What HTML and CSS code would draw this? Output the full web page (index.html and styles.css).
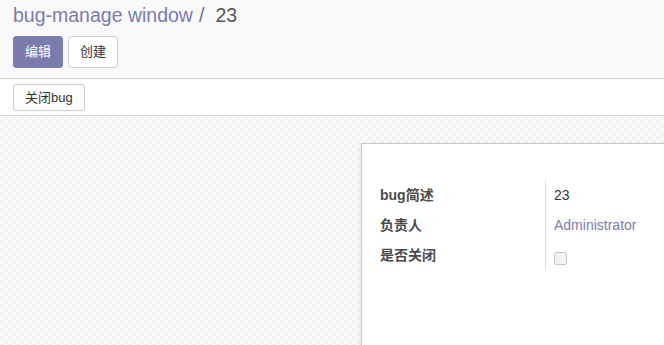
FILE: index.html
```html
<!DOCTYPE html>
<html>
<head>
    <meta charset="utf-8" />
    <title>bug-manage window</title>
    <link rel="stylesheet" href="styles.css">
</head>
<body>
<div class="control_panel">
    <ol class="breadcrumb">
        <li><a href="javascript:;">bug-manage window</a></li>
        <li class="sep">/</li>
        <li class="active">23</li>
    </ol>
    <div class="cp_buttons">
        <a href="javascript:;" class="btn btn_primary">编辑</a>
        <a href="javascript:;" class="btn">创建</a>
    </div>
</div>
<div class="statusbar">
    <a href="javascript:;" class="btn btn_small">关闭bug</a>
</div>
<div class="form_view">
    <div class="form_sheet">
        <div class="inner_group">
            <div class="label">bug简述</div>
            <div class="value">23</div>
            <div class="label">负责人</div>
            <div class="value"><a href="javascript:;">Administrator</a></div>
            <div class="label">是否关闭</div>
            <div class="value"><span class="checkbox"></span></div>
        </div>
    </div>
</div>
</body>
</html>
```
FILE: styles.css
```css
html, body {margin: 0;padding: 0;height: 100%;overflow: hidden;}
body {font-family: "Liberation Sans", "Noto Sans CJK SC", sans-serif;font-size: 13px;color: #4c4c4c;background: #fff;}
a {text-decoration: none;}

.control_panel {background: #f9f9f9;border-bottom: 1px solid #cfcfcf;padding: 2px 13px 10px;height: 66px;}
.breadcrumb {list-style: none;margin: 0;padding: 0;display: flex;font-size: 19.5px;line-height: 26px;height: 26px;}
.breadcrumb a {color: #7c7bad;}
.breadcrumb .sep {color: #6f6e94;padding: 0 11px 0 6px;}
.breadcrumb .active {color: #555;}
.cp_buttons {display: flex;gap: 5px;margin-top: 8px;}

.btn {display: block;box-sizing: border-box;height: 32px;line-height: 30px;padding: 0 11px;border: 1px solid #ccc;border-radius: 3px;background: #fff;color: #333;font-size: 13px;}
.btn_primary {background: #7c7bad;border-color: #7c7bad;color: #fff;}
.btn_small {height: 27px;line-height: 25px;padding: 0 11px;display: inline-block;}

.statusbar {background: #fff;border-bottom: 1px solid #d4d4d4;padding: 5px 13px 0;height: 31px;}

.form_view {height: 100%;padding: 27px 0 0 361px;background-color: #f7f7f7;
    background-image: conic-gradient(#f2f2f2 25%, #fbfbfb 0 50%, #f2f2f2 0 75%, #fbfbfb 0);
    background-size: 8px 8px;}
.form_sheet {background: #fff;border-left: 1px solid #c8c8d3;border-top: 1px solid #c8c8d3;height: 400px;padding: 36px 0 0 18px;box-shadow: -2px 0 6px -3px rgba(0,0,0,0.15);}

.inner_group {display: grid;grid-template-columns: 165px 1fr;grid-auto-rows: 30px;line-height: 30px;font-size: 14px;}
.inner_group .label {font-weight: bold;color: #4c4c4c;}
.inner_group .value {border-left: 1px solid #ddd;padding-left: 8px;color: #333;}
.inner_group .value a {color: #7c7bad;}
.checkbox {display: inline-block;width: 11px;height: 11px;border: 1px solid #c8c8c8;border-radius: 2px;background: #f3f3f3;vertical-align: -5px;}
```
